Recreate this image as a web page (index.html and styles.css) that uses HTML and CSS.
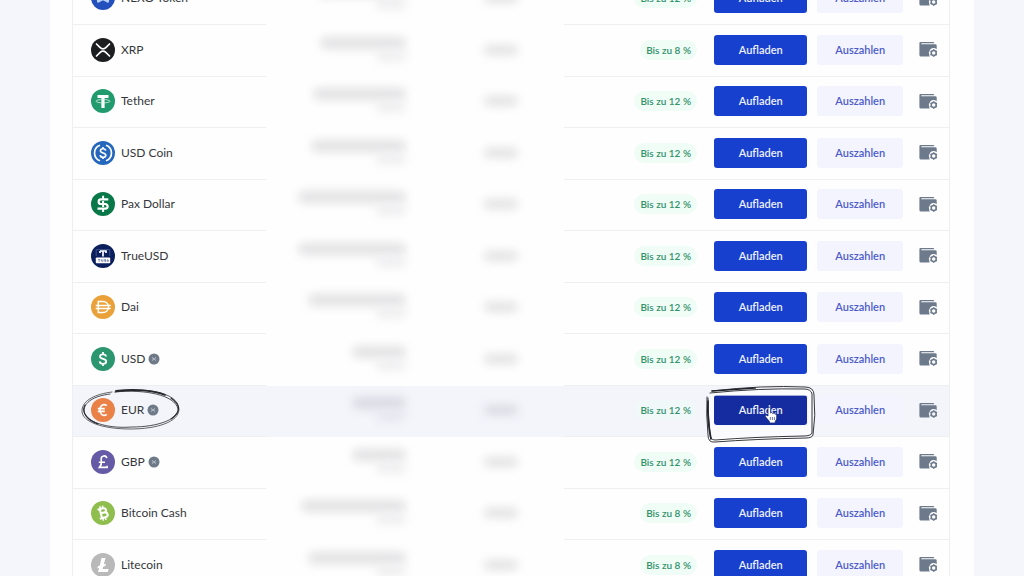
FILE: index.html
```html
<!DOCTYPE html>
<html lang="de">
<head>
<meta charset="utf-8">
<meta name="viewport" content="width=device-width, initial-scale=1">
<title>Konto</title>
<link rel="stylesheet" href="styles.css">
</head>
<body>
<svg class="defs" aria-hidden="true">
  <symbol id="wallet" viewBox="0 0 19 17">
    <path d="M1.500 1H14a1.300 1.300 0 0 1 1.300 1.300H2.300V3.200H16.300a1.400 1.400 0 0 1 1.400 1.400V8.200Q14.500 5.600 11.400 8.200L9.800 11.500L10.600 15.500H2a1.600 1.600 0 0 1-1.600-1.600V2.200A1.200 1.200 0 0 1 1.500 1Z" fill="#6d7a8b"/>
    <circle cx="14.700" cy="12" r="2.500" fill="none" stroke="#6d7a8b" stroke-width="1.500"/>
    <path d="M14.700 8.300v1.300M14.700 14.400v1.300M11.500 10.200l1.100.6M16.800 13.200l1.100.6M11.500 13.800l1.100-.6M16.800 10.800l1.100-.6" stroke="#6d7a8b" stroke-width="1.500"/>
  </symbol>
  <symbol id="info" viewBox="0 0 12 12">
    <circle cx="6" cy="6" r="5.500" fill="#6f7a89"/>
    <path d="M4.200 4.200l3.600 3.600M7.800 4.200L4.200 7.800M4 6h1M7 6h1" stroke="#b3bbc5" stroke-width=".9"/>
  </symbol>
</svg>
<main class="panel">
<table class="accounts" aria-label="Guthaben">
<tbody>
<tr>
  <td class="asset"><div class="coin"><svg class="logo" viewBox="0 0 24 24" aria-hidden="true"><circle cx="12" cy="12" r="12" fill="#2450bd"/><path d="M7.200 15.500V9l4.800 3 4.800-3v6.500L12 13z" fill="#b9d2fa" stroke="#b9d2fa" stroke-width="2.500" stroke-linejoin="round"/></svg><span>NEXO Token</span></div></td>
  <td class="balance"><div class="hidden-sum"><i class="smudge" style="width:90px"></i><i class="smudge small"></i></div></td>
  <td class="interest"><i class="smudge mid"></i></td>
  <td class="rate"><span class="pill">Bis zu 12 %</span></td>
  <td class="actions"><div class="tools"><button class="btn primary">Aufladen</button><button class="btn ghost">Auszahlen</button><button class="icon-btn" aria-label="Wallet-Einstellungen"><svg class="wallet"><use href="#wallet"/></svg></button></div></td>
</tr>
<tr>
  <td class="asset"><div class="coin"><svg class="logo" viewBox="0 0 24 24" aria-hidden="true"><circle cx="12" cy="12" r="12" fill="#1d1e20"/><path d="M5.500 6l3.700 3.700c1.600 1.600 4 1.600 5.600 0L18.500 6M5.500 18l3.700-3.700c1.600-1.600 4-1.600 5.600 0L18.500 18" fill="none" stroke="#fff" stroke-width="1.700" stroke-linecap="round"/></svg><span>XRP</span></div></td>
  <td class="balance"><div class="hidden-sum"><i class="smudge" style="width:86px"></i><i class="smudge small"></i></div></td>
  <td class="interest"><i class="smudge mid"></i></td>
  <td class="rate"><span class="pill">Bis zu 8 %</span></td>
  <td class="actions"><div class="tools"><button class="btn primary">Aufladen</button><button class="btn ghost">Auszahlen</button><button class="icon-btn" aria-label="Wallet-Einstellungen"><svg class="wallet"><use href="#wallet"/></svg></button></div></td>
</tr>
<tr>
  <td class="asset"><div class="coin"><svg class="logo" viewBox="0 0 24 24" aria-hidden="true"><circle cx="12" cy="12" r="12" fill="#219a6d"/><path d="M6.500 6h11v3.100h-3.900V19h-3.200V9.100H6.500z" fill="#fff"/><ellipse cx="12" cy="12.200" rx="7" ry="1.700" fill="none" stroke="#d8f1e6" stroke-width=".8"/></svg><span>Tether</span></div></td>
  <td class="balance"><div class="hidden-sum"><i class="smudge" style="width:93px"></i><i class="smudge small"></i></div></td>
  <td class="interest"><i class="smudge mid"></i></td>
  <td class="rate"><span class="pill">Bis zu 12 %</span></td>
  <td class="actions"><div class="tools"><button class="btn primary">Aufladen</button><button class="btn ghost">Auszahlen</button><button class="icon-btn" aria-label="Wallet-Einstellungen"><svg class="wallet"><use href="#wallet"/></svg></button></div></td>
</tr>
<tr>
  <td class="asset"><div class="coin"><svg class="logo" viewBox="0 0 24 24" aria-hidden="true"><circle cx="12" cy="12" r="12" fill="#2467bd"/><path d="M9 4.200a8.300 8.300 0 0 0 0 15.600M15 4.200a8.300 8.300 0 0 1 0 15.600" fill="none" stroke="#fff" stroke-width="1.700"/><path d="M14.700 9.700c-.2-1.300-1.200-2-2.700-2s-2.600.8-2.600 2.100c0 3 5.400 1.400 5.400 4.400 0 1.300-1.200 2.100-2.800 2.100s-2.700-.8-2.800-2.200M12 5.900v1.800M12 16.300v1.800" fill="none" stroke="#fff" stroke-width="1.600"/></svg><span>USD Coin</span></div></td>
  <td class="balance"><div class="hidden-sum"><i class="smudge" style="width:95px"></i><i class="smudge small"></i></div></td>
  <td class="interest"><i class="smudge mid"></i></td>
  <td class="rate"><span class="pill">Bis zu 12 %</span></td>
  <td class="actions"><div class="tools"><button class="btn primary">Aufladen</button><button class="btn ghost">Auszahlen</button><button class="icon-btn" aria-label="Wallet-Einstellungen"><svg class="wallet"><use href="#wallet"/></svg></button></div></td>
</tr>
<tr>
  <td class="asset"><div class="coin"><svg class="logo" viewBox="0 0 24 24" aria-hidden="true"><circle cx="12" cy="12" r="12" fill="#087849"/><path d="M17.300 7.300H10a2.300 2.300 0 0 0 0 4.700h4.300a2.300 2.300 0 0 1 0 4.700H6.500M6.800 9.700h1.400M16 14.400h1.600" fill="none" stroke="#fff" stroke-width="2.200"/><path d="M12.100 3.800v4M12.100 16v4M12.100 9v6" stroke="#fff" stroke-width="2"/></svg><span>Pax Dollar</span></div></td>
  <td class="balance"><div class="hidden-sum"><i class="smudge" style="width:108px"></i><i class="smudge small"></i></div></td>
  <td class="interest"><i class="smudge mid"></i></td>
  <td class="rate"><span class="pill">Bis zu 12 %</span></td>
  <td class="actions"><div class="tools"><button class="btn primary">Aufladen</button><button class="btn ghost">Auszahlen</button><button class="icon-btn" aria-label="Wallet-Einstellungen"><svg class="wallet"><use href="#wallet"/></svg></button></div></td>
</tr>
<tr>
  <td class="asset"><div class="coin"><svg class="logo" viewBox="0 0 24 24" aria-hidden="true"><circle cx="12" cy="12" r="12" fill="#0b1f5c"/><path d="M5.200 12V5.500h13.600V12" fill="none" stroke="#4d6299" stroke-width=".7"/><path d="M9 7h6v1.900M9 8.900V7M12 7v5.500" fill="none" stroke="#fff" stroke-width="1.700"/><rect x="4.800" y="13.500" width="14.400" height="5.800" rx=".8" fill="#fff"/><path d="M7 15.600h2.400M8.200 15.600v2.200M10.600 15.300v2h1.400v-2M15 15.600h-1.500v.8H15v1h-1.600M16.400 15.400v2h1v-1.600" fill="none" stroke="#5a6c9b" stroke-width=".7"/></svg><span>TrueUSD</span></div></td>
  <td class="balance"><div class="hidden-sum"><i class="smudge" style="width:108px"></i><i class="smudge small"></i></div></td>
  <td class="interest"><i class="smudge mid"></i></td>
  <td class="rate"><span class="pill">Bis zu 12 %</span></td>
  <td class="actions"><div class="tools"><button class="btn primary">Aufladen</button><button class="btn ghost">Auszahlen</button><button class="icon-btn" aria-label="Wallet-Einstellungen"><svg class="wallet"><use href="#wallet"/></svg></button></div></td>
</tr>
<tr>
  <td class="asset"><div class="coin"><svg class="logo" viewBox="0 0 24 24" aria-hidden="true"><circle cx="12" cy="12" r="12" fill="#eaa13a"/><path d="M7.300 6.500h4.500c7.600 0 7.600 11 0 11H7.300zM4.700 10.600h15M4.700 13.400h15" fill="none" stroke="#fff" stroke-width="1.500"/></svg><span>Dai</span></div></td>
  <td class="balance"><div class="hidden-sum"><i class="smudge" style="width:98px"></i><i class="smudge small"></i></div></td>
  <td class="interest"><i class="smudge mid"></i></td>
  <td class="rate"><span class="pill">Bis zu 12 %</span></td>
  <td class="actions"><div class="tools"><button class="btn primary">Aufladen</button><button class="btn ghost">Auszahlen</button><button class="icon-btn" aria-label="Wallet-Einstellungen"><svg class="wallet"><use href="#wallet"/></svg></button></div></td>
</tr>
<tr>
  <td class="asset"><div class="coin"><svg class="logo" viewBox="0 0 24 24" aria-hidden="true"><circle cx="12" cy="12" r="12" fill="#2c9670"/><path d="M15.200 9.500c-.3-1.400-1.500-2.200-3.200-2.200s-3 .8-3 2.200c0 3.300 6.200 1.600 6.200 5 0 1.400-1.400 2.300-3.200 2.300s-3.200-.9-3.300-2.400M12 5v2.300M12 16.800V19" fill="none" stroke="#fff" stroke-width="1.800"/></svg><span>USD</span><svg class="info"><use href="#info"/></svg></div></td>
  <td class="balance"><div class="hidden-sum"><i class="smudge" style="width:54px"></i><i class="smudge small"></i></div></td>
  <td class="interest"><i class="smudge mid"></i></td>
  <td class="rate"><span class="pill">Bis zu 12 %</span></td>
  <td class="actions"><div class="tools"><button class="btn primary">Aufladen</button><button class="btn ghost">Auszahlen</button><button class="icon-btn" aria-label="Wallet-Einstellungen"><svg class="wallet"><use href="#wallet"/></svg></button></div></td>
</tr>
<tr class="active">
  <td class="asset"><div class="coin"><svg class="logo" viewBox="0 0 24 24" aria-hidden="true"><circle cx="12" cy="12" r="12" fill="#ea8146"/><path d="M15.800 7.700c-3.300-2.600-6.800-.4-6.800 4.300s3.500 6.900 6.800 4.300M6.800 10.700h7M6.800 13.300h7" fill="none" stroke="#fff" stroke-width="1.700"/></svg><span>EUR</span><svg class="info"><use href="#info"/></svg>
    <svg class="ring" viewBox="0 0 102 44" aria-hidden="true"><g fill="none" stroke="#25272c" stroke-linecap="round"><path d="M35 4C61-1 98 3 99 21C99 34 77 41 50 41C23 41 2 34 2 23C2 12 16 6 32 4" stroke-width=".7"/><path d="M35 4C65 1 95 7 98 21C99 31 78 39 52 39C25 41 5 33 4 23C4 14 14 8 30 6" stroke-width=".8"/><path d="M36 3C54 1 74 2 85 7" stroke-width="1.800"/><path d="M91 10C101 17 101 24 91 31M5 17C1 24 7 32 18 36" stroke-width="1.100"/></g></svg></div></td>
  <td class="balance"><div class="hidden-sum"><i class="smudge" style="width:54px"></i><i class="smudge small"></i></div></td>
  <td class="interest"><i class="smudge mid"></i></td>
  <td class="rate"><span class="pill">Bis zu 12 %</span></td>
  <td class="actions"><div class="tools"><button class="btn primary">Aufladen</button><button class="btn ghost">Auszahlen</button><button class="icon-btn" aria-label="Wallet-Einstellungen"><svg class="wallet"><use href="#wallet"/></svg></button>
    <svg class="frame" viewBox="0 0 112 60" aria-hidden="true"><path d="M6 6Q60 0 107 4L106 51Q55 53 7 57L3 20Z M9 11V41H103V11Z" fill="#fff" fill-rule="evenodd" opacity=".6"/><g fill="none" stroke="#222429" stroke-linecap="round" stroke-linejoin="round"><path d="M7 6Q58 0 100 2Q109 2 109 10Q111 31 108 50Q107 53 101 53Q50 54 10 57Q3 58 3 50Q1 29 2 12" stroke-width=".9"/><path d="M5 8Q55 3 99 4Q106 4 107 9L107 48Q106 51 98 51Q48 52 10 55Q5 55 5 48Q3 28 3 13" stroke-width=".9"/><path d="M7 6L50 3M3 16Q2 35 6 54" stroke-width="1.700"/></g></svg>
    <svg class="pointer" viewBox="0 0 14 18" aria-hidden="true"><path d="M4 10V2.500a1.300 1.300 0 0 1 2.600 0V7l1-.5 1.100.9 1.300-.3.900 1 1.200-.1.600 1.200V13l-1.500 2.500V17H5.500v-1.500L1.500 10.800C.8 9.500 2.200 8.800 3 9.400z" fill="#fff" stroke="#1b2c74" stroke-width=".8"/><path d="M6.300 11v3M8.400 11v3M10.400 11v3" stroke="#33406f" stroke-width=".7"/></svg></div></td>
</tr>
<tr>
  <td class="asset"><div class="coin"><svg class="logo" viewBox="0 0 24 24" aria-hidden="true"><circle cx="12" cy="12" r="12" fill="#655aa6"/><path d="M15.800 8.200c-.7-3.500-5.900-2.800-5.600.9.100 2.800 1.100 5.300-1.700 8.300h7.600v-1.700M7.800 12.200h6.200" fill="none" stroke="#fff" stroke-width="1.600"/></svg><span>GBP</span><svg class="info"><use href="#info"/></svg></div></td>
  <td class="balance"><div class="hidden-sum"><i class="smudge" style="width:54px"></i><i class="smudge small"></i></div></td>
  <td class="interest"><i class="smudge mid"></i></td>
  <td class="rate"><span class="pill">Bis zu 12 %</span></td>
  <td class="actions"><div class="tools"><button class="btn primary">Aufladen</button><button class="btn ghost">Auszahlen</button><button class="icon-btn" aria-label="Wallet-Einstellungen"><svg class="wallet"><use href="#wallet"/></svg></button></div></td>
</tr>
<tr>
  <td class="asset"><div class="coin"><svg class="logo" viewBox="0 0 24 24" aria-hidden="true"><circle cx="12" cy="12" r="12" fill="#8fbd4e"/><g transform="rotate(-14 12 12)" fill="none" stroke="#fff"><path d="M7.500 7.500h5.700c3.200 0 3.200 4.300 0 4.300H9.800M13.200 11.800c4 0 4 4.900 0 4.900H7.500M9.800 7.500v9.200" stroke-width="2.100"/><path d="M10.500 4.700v2.500M13.200 4.700v2.500M10.500 17v2.500M13.200 17v2.500" stroke-width="1.500"/></g></svg><span>Bitcoin Cash</span></div></td>
  <td class="balance"><div class="hidden-sum"><i class="smudge" style="width:105px"></i><i class="smudge small"></i></div></td>
  <td class="interest"><i class="smudge mid"></i></td>
  <td class="rate"><span class="pill">Bis zu 8 %</span></td>
  <td class="actions"><div class="tools"><button class="btn primary">Aufladen</button><button class="btn ghost">Auszahlen</button><button class="icon-btn" aria-label="Wallet-Einstellungen"><svg class="wallet"><use href="#wallet"/></svg></button></div></td>
</tr>
<tr>
  <td class="asset"><div class="coin"><svg class="logo" viewBox="0 0 24 24" aria-hidden="true"><circle cx="12" cy="12" r="12" fill="#b9b9b9"/><path d="M10.500 5h4l-1.700 6.500 2.200-.8-.6 2.200-2.200.8-.6 2.300h6l-.8 3H7l1.200-4.300-1.900.7.600-2.200 1.900-.7z" fill="#fff"/></svg><span>Litecoin</span></div></td>
  <td class="balance"><div class="hidden-sum"><i class="smudge" style="width:98px"></i><i class="smudge small"></i></div></td>
  <td class="interest"><i class="smudge mid"></i></td>
  <td class="rate"><span class="pill">Bis zu 8 %</span></td>
  <td class="actions"><div class="tools"><button class="btn primary">Aufladen</button><button class="btn ghost">Auszahlen</button><button class="icon-btn" aria-label="Wallet-Einstellungen"><svg class="wallet"><use href="#wallet"/></svg></button></div></td>
</tr>
</tbody>
</table>
</main>
</body>
</html>
```
FILE: styles.css
```css
* { box-sizing: border-box; }

body {
  display: flow-root;
  height: 100vh;
  margin: 0;
  overflow: hidden;
  background: #f4f6fb;
  color: #35373b;
  font-family: Lato, "Noto Sans", sans-serif;
  font-size: 12px;
}

.defs { position: absolute; width: 0; height: 0; }

/* The list is shown scrolled part way down */
.panel {
  margin: -26px 50px 0;
  padding: 0 24px 0 22px;
  background: #fefefe;
}

.accounts {
  width: 100%;
  border: solid #efeff1;
  border-width: 0 1px;
  border-spacing: 0;
  table-layout: fixed;
}

td { height: 51px; padding: 0 0 2px; border-bottom: 1px solid #efeff1; }
tr:nth-child(even) td { height: 52px; }
.active td { background: #f4f5fb; }
td.balance, td.interest { border-bottom-color: transparent; }

.asset { width: 22%; padding-left: 18px; }
.balance { width: 18%; padding-right: 17px; padding-bottom: 4px; }
.interest { width: 16%; padding-left: 16px; }
.rate { padding-right: 17px; text-align: right; }
.actions { width: 235px; padding-right: 11px; }

.coin { position: relative; display: flex; align-items: center; gap: 6px; }
.coin span { font-size: 12px; line-height: 16px; }
.logo { flex: none; width: 24px; height: 24px; }
.info { width: 12px; height: 12px; margin-left: -3px; }

.hidden-sum { display: flex; flex-direction: column; align-items: flex-end; gap: 2px; }
.smudge { display: block; height: 12px; border-radius: 6px; background: #e2e2e4; filter: blur(5px); }
.smudge.small { width: 30px; height: 10px; background: #ededef; }
.smudge.mid { width: 34px; height: 10px; margin: 0 auto; }
.active .smudge { background: #d9dbe2; }
.active .small { background: #e4e6ed; }

.pill {
  display: inline-block;
  padding: 2px 6px;
  border-radius: 10px;
  background: #f0fcf6;
  color: #33926a;
  font-size: 10px;
  font-weight: 600;
  line-height: 16px;
}
.active .pill { background: #f1f8f9; }

.tools { position: relative; display: flex; align-items: center; }

button { border: 0; padding: 0; font-family: inherit; cursor: pointer; }
.btn { height: 30px; border-radius: 3px; font-size: 11px; font-weight: 600; line-height: 16px; }
.primary { width: 94px; margin-right: 10px; background: #1840cf; color: #edf1ff; }
.ghost { width: 86px; margin-right: 16px; background: #f4f4fe; color: #4c5cc9; }
.active .primary { background: #142c9f; }
.icon-btn { display: flex; background: none; }
.wallet { width: 19px; height: 17px; }

/* Hand-drawn marks and the mouse pointer over the active row */
.ring { position: absolute; top: -10px; left: -11px; width: 102px; height: 44px; }
.frame { position: absolute; top: -10px; left: -9px; width: 112px; height: 60px; }
.pointer { position: absolute; top: 11px; left: 50px; width: 14px; height: 18px; }
```
